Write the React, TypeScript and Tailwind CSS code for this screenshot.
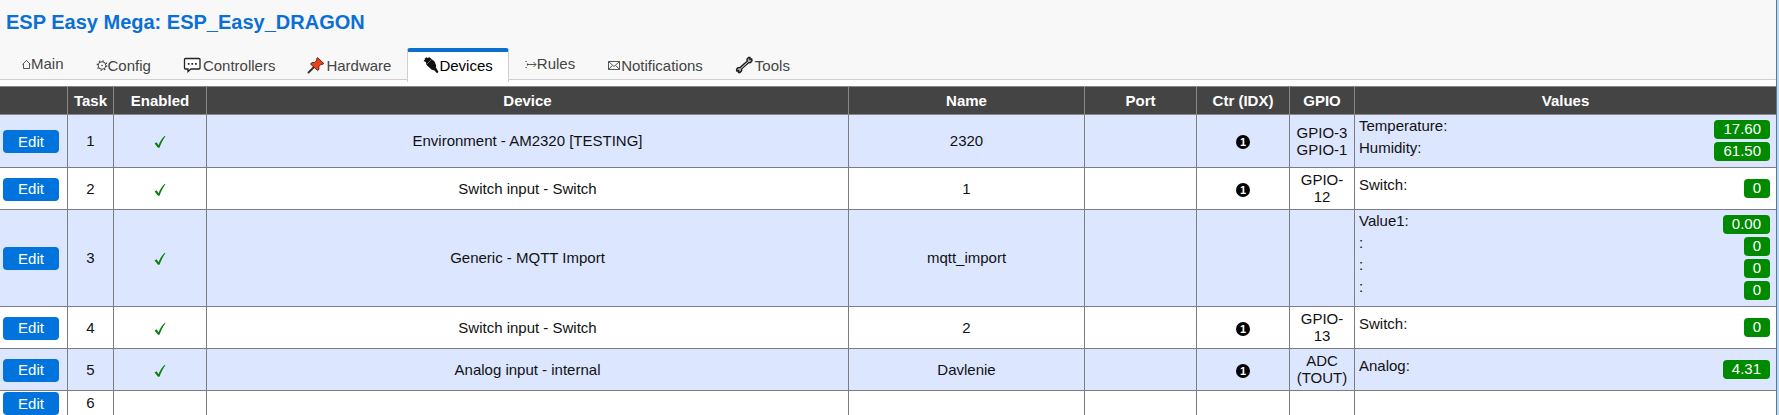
import { clsx } from 'clsx';
import type { ReactNode } from 'react';

interface Tab {
  label: string;
  icon: ReactNode;
  active?: boolean;
  raised?: boolean;
}

interface TaskValue {
  label: string;
  value: string;
}

interface Task {
  id: number;
  enabled?: boolean;
  device?: string;
  name?: string;
  controller?: boolean;
  gpio?: string[];
  values?: TaskValue[];
}

const HomeIcon = () => (
  <svg className="w-[9px] h-[15px]" viewBox="0 0 9 15" fill="none" stroke="currentColor" strokeWidth={0.9}>
    <path d="M0.5 8.5 4.5 4.5 8.5 8.5M1.5 8v4.5h6V8" />
  </svg>
);

const GearIcon = () => (
  <svg className="w-3 h-[15px]" viewBox="0 0 12 15" fill="none" stroke="currentColor">
    <circle cx="6" cy="7.5" r="3.8" />
    <circle cx="6" cy="7.5" r="4.8" strokeWidth={1.2} strokeDasharray="1.4 2.37" />
    <circle cx="6" cy="7.5" r="0.8" fill="currentColor" stroke="none" />
  </svg>
);

const SpeechIcon = () => (
  <svg className="w-5 h-[18px]" viewBox="0 0 20 18" fill="none">
    <path
      d="M2.5 2.5h13.5q1 0 1 1v8.500q0 1-1 1H8L5 15.500V13H2.500q-1 0-1-1V3.500q0-1 1-1z"
      fill="#fff"
      stroke="#222"
      strokeWidth={1.3}
    />
    <path d="M4.800 7h1.700v1.700H4.800zM8.400 7h1.700v1.700H8.400zM12 7h1.700v1.700H12z" fill="#222" />
  </svg>
);

const PinIcon = () => (
  <svg className="w-[19px] h-[18px]" viewBox="0 0 19 18">
    <path d="M7 11 1.500 16.500" stroke="#333" strokeWidth={2} strokeLinecap="round" />
    <path
      d="M10.500 1.500 16.800 7.500 15 8.500 13.800 8.300 11.800 10.800 12 13.300 10.600 14.500 3.500 8 5 6.600 7.500 6.500 10 4.300 9.700 2.800z"
      fill="#e8431a"
      stroke="#5a1508"
      strokeWidth={0.9}
      strokeLinejoin="round"
    />
  </svg>
);

const PlugIcon = () => (
  <svg className="w-4 h-[18px]" viewBox="0 0 16 18">
    <path
      d="M0.500 5 2 3.500 1.500 2.800 3.500 1.300 4.500 2 6.500 1.300 11.500 5.500 13.200 9.500 13 11.500 15.500 16 14 17.200 11.500 14.500 8.500 13.500 3.500 9 2.800 6z"
      fill="#111"
    />
    <path d="M4 8 8.500 3.500" stroke="#888" strokeWidth={0.7} />
  </svg>
);

const ArrowIcon = () => (
  <svg className="w-3 h-[15px]" viewBox="0 0 12 15" fill="none" stroke="currentColor" strokeWidth={0.9}>
    <path d="M3 8.500h8M8.500 6 11 8.500 8.500 11" />
    <path d="M0.500 5.500h1.200M0.500 11.500h1.200M2.500 7.500v2" strokeWidth={1.2} />
  </svg>
);

const MailIcon = () => (
  <svg className="w-[14px] h-[15px]" viewBox="0 0 14 15" fill="none" stroke="currentColor">
    <path d="M1.500 3.500h11v8h-11zM1.500 3.500 7 8.500 12.500 3.500M1.500 11.500 5.300 7.500M12.500 11.500 8.700 7.500" strokeWidth={0.9} />
  </svg>
);

const WrenchIcon = () => (
  <svg className="w-5 h-[18px]" viewBox="0 0 20 18" strokeLinecap="round" strokeLinejoin="round">
    <path
      d="M12.200 5.300 12 3.300 13.500 1.500 15 1.400 14.800 3.200 16.800 3 17 4.700 15.500 6.500 13.500 6.800 6.700 12.800 6.600 14.800 5 16.500 3.500 16.600 3.800 14.800 1.700 15 1.600 13.300 3 11.700 5.200 11.400z"
      fill="#aaa"
      stroke="#1c1c1c"
      strokeWidth={1.4}
    />
    <path d="M6.500 12 12.500 6.500" stroke="#ddd" strokeWidth={0.8} />
  </svg>
);

const CheckIcon = () => (
  <svg className="inline-block w-3 h-[14px]" viewBox="0 0 12 14" role="img" aria-label="Enabled">
    <path d="M0.600 8.500 2.600 7.300 4.500 10.300C6 6.500 8 3.500 10.800 0.800L11.400 1.300C8.800 4.800 7 8.500 5.500 12.800H4z" fill="#0a7d0f" />
  </svg>
);

const tabs: Tab[] = [
  { label: 'Main', icon: <HomeIcon />, raised: true },
  { label: 'Config', icon: <GearIcon /> },
  { label: 'Controllers', icon: <SpeechIcon /> },
  { label: 'Hardware', icon: <PinIcon /> },
  { label: 'Devices', icon: <PlugIcon />, active: true },
  { label: 'Rules', icon: <ArrowIcon />, raised: true },
  { label: 'Notifications', icon: <MailIcon /> },
  { label: 'Tools', icon: <WrenchIcon /> },
];

const tasks: Task[] = [
  {
    id: 1,
    enabled: true,
    device: 'Environment - AM2320 [TESTING]',
    name: '2320',
    controller: true,
    gpio: ['GPIO-3', 'GPIO-1'],
    values: [
      { label: 'Temperature', value: '17.60' },
      { label: 'Humidity', value: '61.50' },
    ],
  },
  {
    id: 2,
    enabled: true,
    device: 'Switch input - Switch',
    name: '1',
    controller: true,
    gpio: ['GPIO-', '12'],
    values: [{ label: 'Switch', value: '0' }],
  },
  {
    id: 3,
    enabled: true,
    device: 'Generic - MQTT Import',
    name: 'mqtt_import',
    values: [
      { label: 'Value1', value: '0.00' },
      { label: '', value: '0' },
      { label: '', value: '0' },
      { label: '', value: '0' },
    ],
  },
  {
    id: 4,
    enabled: true,
    device: 'Switch input - Switch',
    name: '2',
    controller: true,
    gpio: ['GPIO-', '13'],
    values: [{ label: 'Switch', value: '0' }],
  },
  {
    id: 5,
    enabled: true,
    device: 'Analog input - internal',
    name: 'Davlenie',
    controller: true,
    gpio: ['ADC', '(TOUT)'],
    values: [{ label: 'Analog', value: '4.31' }],
  },
  { id: 6 },
];

const columns = [
  { title: '', width: 'w-[68px]' },
  { title: 'Task', width: 'w-[46px]' },
  { title: 'Enabled', width: 'w-[93px]' },
  { title: 'Device', width: '' },
  { title: 'Name', width: 'w-[236px]' },
  { title: 'Port', width: 'w-[112px]' },
  { title: 'Ctr (IDX)', width: 'w-[93px]' },
  { title: 'GPIO', width: 'w-[65px]' },
  { title: 'Values', width: 'w-[421px]' },
];

function Menu() {
  return (
    <nav className="flex h-8 items-start border-b border-[#d0d0d0] pl-[6px]">
      {tabs.map((tab) => (
        <a
          key={tab.label}
          href={`#${tab.label.toLowerCase()}`}
          className={clsx(
            'flex items-center border-t-4 leading-[17px]',
            tab.active
              ? 'h-[34px] rounded-t-[3px] border-x border-x-[#d0d0d0] border-t-[#0b6fcd] bg-white px-[15px] pb-1 text-black'
              : 'border-t-transparent px-4 text-[#444]',
            tab.raised ? 'h-[26px]' : !tab.active && 'h-[30px]',
          )}
        >
          {tab.icon}
          {tab.label}
        </a>
      ))}
    </nav>
  );
}

function TaskRow({ task }: { task: Task }) {
  return (
    <tr className="bg-white odd:bg-[#dde6ff] [&>td]:border-r [&>td]:border-b [&>td]:border-[#7c7c84] [&>td:last-child]:border-r-0 last:[&>td]:border-b-0">
      <td className="pt-px pl-[3px] text-left">
        <button type="button" className="block h-[23px] w-14 rounded-[4px] bg-[#0074dc] text-white">
          Edit
        </button>
      </td>
      <td>{task.id}</td>
      <td>{task.enabled && <CheckIcon />}</td>
      <td>{task.device}</td>
      <td>{task.name}</td>
      <td />
      <td>
        {task.controller && (
          <span className="inline-block size-[14px] rounded-full bg-black text-[11px] leading-[14px] font-bold text-white">
            1
          </span>
        )}
      </td>
      <td>
        {task.gpio && (
          <div className="pt-[3px] pb-1 leading-[17px]">
            {task.gpio.map((pin) => (
              <div key={pin}>{pin}</div>
            ))}
          </div>
        )}
      </td>
      <td>
        {task.values && (
          <div className="flex flex-col gap-[3px] pt-[5px] pr-[6px] pb-[6px] pl-1">
            {task.values.map((item, i) => (
              <div key={i} className="flex justify-between">
                <span className="h-[19px] leading-3">{item.label}:</span>
                <span className="h-[19px] rounded-[4px] bg-[#008a00] px-[9px] leading-[17px] text-white">
                  {item.value}
                </span>
              </div>
            ))}
          </div>
        )}
      </td>
    </tr>
  );
}

export default function App() {
  return (
    <div className="flex min-h-screen bg-white font-['Liberation_Sans',Arial,sans-serif] text-[15px] leading-5 text-[#111]">
      <div className="min-w-0 flex-1">
        <header className="bg-[#f8f8f8]">
          <h1 className="h-12 pt-[10px] pl-[6px] text-[20px] leading-6 font-bold text-[#0b6fd6]">
            ESP Easy Mega: ESP_Easy_DRAGON
          </h1>
          <Menu />
        </header>
        <table className="mt-[6px] w-full table-fixed border-separate border-spacing-0 text-center">
          <thead>
            <tr className="bg-[#444]">
              {columns.map((col) => (
                <th
                  key={col.title}
                  className={clsx(
                    'h-[29px] border-y border-r border-[#888] p-0 font-bold text-white last:border-r-0',
                    col.width,
                  )}
                >
                  {col.title}
                </th>
              ))}
            </tr>
          </thead>
          <tbody>
            {tasks.map((task) => (
              <TaskRow key={task.id} task={task} />
            ))}
          </tbody>
        </table>
      </div>
      <div className="w-[3px] border-l border-[#5f7590] bg-[#b9d9f5]" />
    </div>
  );
}
